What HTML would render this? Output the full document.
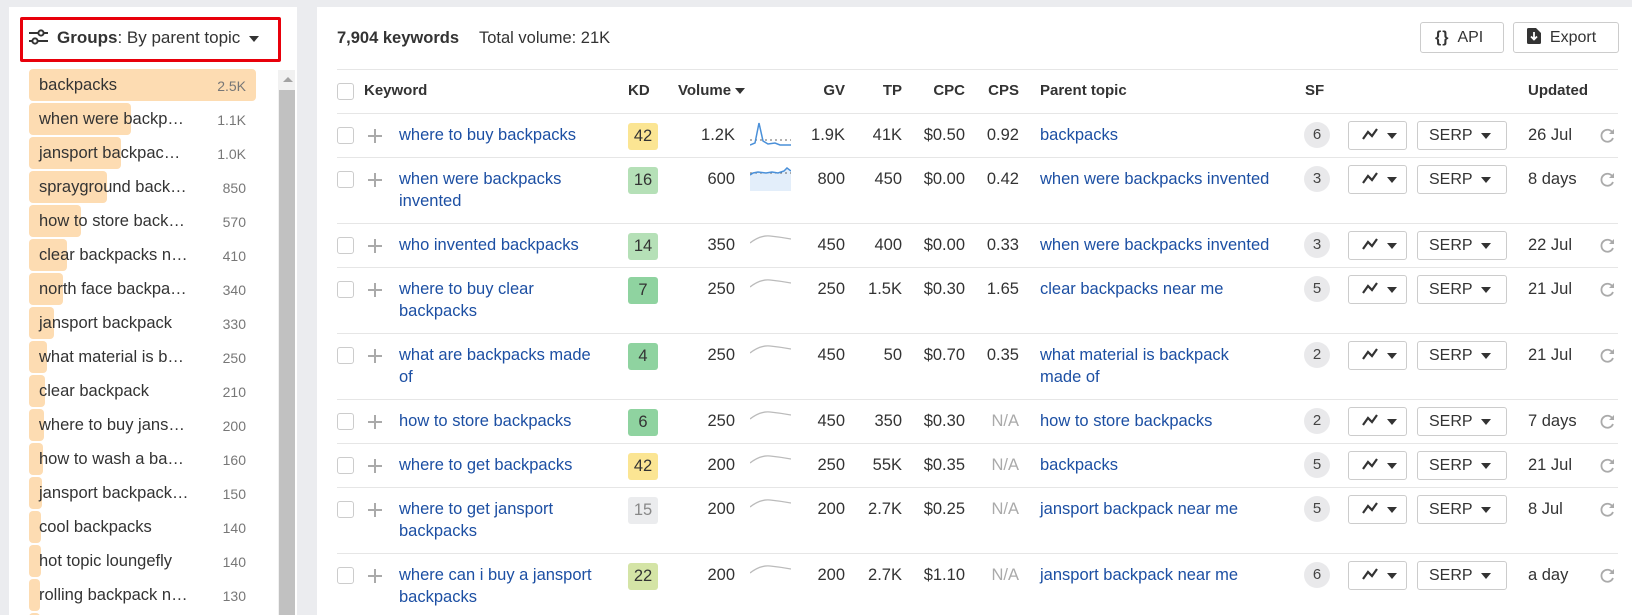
<!DOCTYPE html>
<html><head><meta charset="utf-8"><style>
*{box-sizing:border-box;margin:0;padding:0}
html,body{width:1632px;height:615px;overflow:hidden}
body{background:#ebecef;font-family:"Liberation Sans",Arial,sans-serif;color:#333;position:relative}
.a{position:absolute;white-space:nowrap}
#left{position:absolute;left:9px;top:7px;width:288px;height:608px;background:#fff}
#main{position:absolute;left:317px;top:7px;width:1315px;height:608px;background:#fff}
.it{position:absolute;left:29px;width:227px;height:32px;font-size:16.5px;line-height:32px}
.bar{position:absolute;left:0;top:0;height:32px;background:#fddcb2;border-radius:4px}
.it .t{position:absolute;left:10px;top:0}
.it .c{position:absolute;right:10px;top:1px;font-size:14px;color:#777}
.line{position:absolute;left:337px;right:14px;height:1px;background:#e6e6e6}
.h{position:absolute;top:80px;font-size:15px;font-weight:bold;line-height:22px}
.cb{position:absolute;width:17px;height:17px;border:1px solid #ccc;border-radius:3px;background:#fff}
.row{position:absolute;left:0;width:1632px;font-size:16.5px;line-height:22px}
.row .a{top:11px}
.lk{color:#1c4fa3}
.kd{position:absolute;top:10px;left:628px;width:30px;height:27px;border-radius:3px;text-align:center;line-height:27px!important}
.r{text-align:right}
.sf{position:absolute;left:1304px;top:9px;width:26px;height:26px;border-radius:13px;background:#e9e9eb;text-align:center;line-height:26px;font-size:15px;color:#444}
.btn{position:absolute;top:8px;height:29px;border:1px solid #ccc;border-radius:3px;background:#fff;font-size:16px;line-height:27px}
.tri{display:inline-block;width:0;height:0;border-left:5px solid transparent;border-right:5px solid transparent;border-top:6px solid #333;vertical-align:middle}
.na{color:#aaa}
.pl{position:absolute;left:367px;top:15px}
.rf{position:absolute;left:1600px;top:15px}
</style></head><body>
<div id="left"></div>
<div class="a" style="left:20px;top:17px;width:261px;height:45px;border:3px solid #e8000b;border-radius:2px"></div>
<svg class="a" style="left:29px;top:29px" width="19" height="17" viewBox="0 0 19 17"><g stroke="#333" stroke-width="2" fill="none"><line x1="0" y1="4" x2="19" y2="4"/><line x1="0" y1="12" x2="19" y2="12"/><circle cx="12" cy="4" r="2.6" fill="#fff"/><circle cx="6" cy="12" r="2.6" fill="#fff"/></g></svg>
<div class="a" style="left:57px;top:27px;font-size:17px;line-height:22px"><b>Groups</b>: By parent topic <span class="tri" style="margin-left:4px"></span></div>
<div class="a" style="left:278px;top:70px;width:17px;height:560px;background:#f1f1f1"></div>
<div class="a" style="left:283px;top:77px;width:0;height:0;border-left:5px solid transparent;border-right:5px solid transparent;border-bottom:5px solid #a3a3a3"></div>
<div class="a" style="left:279px;top:90px;width:16px;height:540px;background:#c1c1c1"></div>

<div class="it" style="top:69px"><div class="bar" style="width:227px"></div><span class="t">backpacks</span><span class="c">2.5K</span></div>
<div class="it" style="top:103px"><div class="bar" style="width:102px"></div><span class="t">when were backp…</span><span class="c">1.1K</span></div>
<div class="it" style="top:137px"><div class="bar" style="width:92px"></div><span class="t">jansport backpac…</span><span class="c">1.0K</span></div>
<div class="it" style="top:171px"><div class="bar" style="width:78px"></div><span class="t">sprayground back…</span><span class="c">850</span></div>
<div class="it" style="top:205px"><div class="bar" style="width:52px"></div><span class="t">how to store back…</span><span class="c">570</span></div>
<div class="it" style="top:239px"><div class="bar" style="width:38px"></div><span class="t">clear backpacks n…</span><span class="c">410</span></div>
<div class="it" style="top:273px"><div class="bar" style="width:34px"></div><span class="t">north face backpa…</span><span class="c">340</span></div>
<div class="it" style="top:307px"><div class="bar" style="width:25px"></div><span class="t">jansport backpack</span><span class="c">330</span></div>
<div class="it" style="top:341px"><div class="bar" style="width:18px"></div><span class="t">what material is b…</span><span class="c">250</span></div>
<div class="it" style="top:375px"><div class="bar" style="width:16px"></div><span class="t">clear backpack</span><span class="c">210</span></div>
<div class="it" style="top:409px"><div class="bar" style="width:15px"></div><span class="t">where to buy jans…</span><span class="c">200</span></div>
<div class="it" style="top:443px"><div class="bar" style="width:14px"></div><span class="t">how to wash a ba…</span><span class="c">160</span></div>
<div class="it" style="top:477px"><div class="bar" style="width:13px"></div><span class="t">jansport backpack…</span><span class="c">150</span></div>
<div class="it" style="top:511px"><div class="bar" style="width:12px"></div><span class="t">cool backpacks</span><span class="c">140</span></div>
<div class="it" style="top:545px"><div class="bar" style="width:12px"></div><span class="t">hot topic loungefly</span><span class="c">140</span></div>
<div class="it" style="top:579px"><div class="bar" style="width:11px"></div><span class="t">rolling backpack n…</span><span class="c">130</span></div>
<div class="it" style="top:613px"><div class="bar" style="width:11px"></div></div>

<div id="main"></div>
<div class="a" style="left:337px;top:27px;font-size:16.5px;line-height:22px"><b>7,904 keywords</b><span style="margin-left:20px">Total volume: 21K</span></div>
<div class="btn" style="left:1420px;top:22px;width:84px;height:31px;line-height:29px;padding-left:14px"><b style="letter-spacing:1px">{}</b>&nbsp; API</div>
<div class="btn" style="left:1513px;top:22px;width:106px;height:31px;line-height:29px;padding-left:13px"><svg width="14" height="16" viewBox="0 0 14 16" style="vertical-align:-2px"><path d="M0 1.5Q0 0 1.5 0H9L14 5V14.5Q14 16 12.5 16H1.5Q0 16 0 14.5Z" fill="#333"/><path d="M7 4V11M4 8.5L7 11.5L10 8.5" stroke="#fff" stroke-width="1.8" fill="none"/></svg>&nbsp;&nbsp;Export</div>

<div class="line" style="top:69px"></div>
<div class="cb" style="left:337px;top:83px"></div>
<div class="h" style="left:364px">Keyword</div>
<div class="h" style="left:628px">KD</div>
<div class="h" style="left:678px">Volume <span class="tri" style="margin-left:0"></span></div>
<div class="h r" style="left:800px;width:45px">GV</div>
<div class="h r" style="left:860px;width:42px">TP</div>
<div class="h r" style="left:915px;width:50px">CPC</div>
<div class="h r" style="left:970px;width:49px">CPS</div>
<div class="h" style="left:1040px">Parent topic</div>
<div class="h" style="left:1305px">SF</div>
<div class="h" style="left:1528px">Updated</div>
<div class="line" style="top:113px"></div>

<div class="row" style="top:113px">
<div class="cb" style="left:337px;top:14px"></div><svg class="pl" width="16" height="16"><path d="M8 1V15M1 8H15" stroke="#aaa" stroke-width="2"/></svg>
<div class="a lk" style="left:399px">where to buy backpacks</div>
<div class="kd" style="background:#fbe593">42</div>
<div class="a r" style="left:670px;width:65px">1.2K</div>
<svg class="a" style="left:750px;top:8px" width="41" height="26"><line x1="0" y1="19" x2="41" y2="19" stroke="#666" stroke-dasharray="2 3" stroke-width="1"/><path d="M0 24L5 22L9 2L13 20L18 23L25 22L30 24L41 24" stroke="#4a90d9" stroke-width="1.5" fill="none"/></svg>
<div class="a r" style="left:790px;width:55px">1.9K</div><div class="a r" style="left:850px;width:52px">41K</div><div class="a r" style="left:900px;width:65px">$0.50</div><div class="a r" style="left:970px;width:49px">0.92</div>
<div class="a lk" style="left:1040px">backpacks</div>
<div class="sf">6</div>
<div class="btn" style="left:1348px;width:59px;padding-left:13px"><svg width="16" height="12"><path d="M1 11L6 4L10 8L15 1" stroke="#333" stroke-width="2.2" fill="none"/></svg>&nbsp;&nbsp;<span class="tri"></span></div>
<div class="btn" style="left:1417px;width:90px;padding-left:11px">SERP&nbsp;&nbsp;<span class="tri"></span></div>
<div class="a" style="left:1528px">26 Jul</div>
<svg class="rf" width="15" height="15"><path d="M12.5 4.5A6 6 0 1 0 13 10" stroke="#aaa" stroke-width="1.8" fill="none"/><path d="M14 1V6H9Z" fill="#aaa"/></svg>
</div>
<div class="line" style="top:157px"></div>

<div class="row" style="top:157px">
<div class="cb" style="left:337px;top:14px"></div><svg class="pl" width="16" height="16"><path d="M8 1V15M1 8H15" stroke="#aaa" stroke-width="2"/></svg>
<div class="a lk" style="left:399px">when were backpacks<br>invented</div>
<div class="kd" style="background:#b5e0b7">16</div>
<div class="a r" style="left:670px;width:65px">600</div>
<svg class="a" style="left:750px;top:8px" width="41" height="26"><path d="M0 10L3 8L8 7L16 8L22 7L28 8L34 6L37 3L41 6V26H0Z" fill="#e3eefa"/><line x1="0" y1="8" x2="41" y2="8" stroke="#666" stroke-dasharray="2 3"/><path d="M0 10L3 8L8 7L16 8L22 7L28 8L34 6L37 3L41 6" stroke="#4a90d9" stroke-width="1.5" fill="none"/></svg>
<div class="a r" style="left:790px;width:55px">800</div><div class="a r" style="left:850px;width:52px">450</div><div class="a r" style="left:900px;width:65px">$0.00</div><div class="a r" style="left:970px;width:49px">0.42</div>
<div class="a lk" style="left:1040px">when were backpacks invented</div>
<div class="sf">3</div>
<div class="btn" style="left:1348px;width:59px;padding-left:13px"><svg width="16" height="12"><path d="M1 11L6 4L10 8L15 1" stroke="#333" stroke-width="2.2" fill="none"/></svg>&nbsp;&nbsp;<span class="tri"></span></div>
<div class="btn" style="left:1417px;width:90px;padding-left:11px">SERP&nbsp;&nbsp;<span class="tri"></span></div>
<div class="a" style="left:1528px">8 days</div>
<svg class="rf" width="15" height="15"><path d="M12.5 4.5A6 6 0 1 0 13 10" stroke="#aaa" stroke-width="1.8" fill="none"/><path d="M14 1V6H9Z" fill="#aaa"/></svg>
</div>
<div class="line" style="top:223px"></div>

<div class="row" style="top:223px">
<div class="cb" style="left:337px;top:14px"></div><svg class="pl" width="16" height="16"><path d="M8 1V15M1 8H15" stroke="#aaa" stroke-width="2"/></svg>
<div class="a lk" style="left:399px">who invented backpacks</div>
<div class="kd" style="background:#b5e0b7">14</div>
<div class="a r" style="left:670px;width:65px">350</div>
<svg class="a" style="left:750px;top:8px" width="41" height="26"><path d="M0 12Q10 4 20 5T41 8" stroke="#bbb" stroke-width="1.3" fill="none"/></svg>
<div class="a r" style="left:790px;width:55px">450</div><div class="a r" style="left:850px;width:52px">400</div><div class="a r" style="left:900px;width:65px">$0.00</div><div class="a r" style="left:970px;width:49px">0.33</div>
<div class="a lk" style="left:1040px">when were backpacks invented</div>
<div class="sf">3</div>
<div class="btn" style="left:1348px;width:59px;padding-left:13px"><svg width="16" height="12"><path d="M1 11L6 4L10 8L15 1" stroke="#333" stroke-width="2.2" fill="none"/></svg>&nbsp;&nbsp;<span class="tri"></span></div>
<div class="btn" style="left:1417px;width:90px;padding-left:11px">SERP&nbsp;&nbsp;<span class="tri"></span></div>
<div class="a" style="left:1528px">22 Jul</div>
<svg class="rf" width="15" height="15"><path d="M12.5 4.5A6 6 0 1 0 13 10" stroke="#aaa" stroke-width="1.8" fill="none"/><path d="M14 1V6H9Z" fill="#aaa"/></svg>
</div>
<div class="line" style="top:267px"></div>

<div class="row" style="top:267px">
<div class="cb" style="left:337px;top:14px"></div><svg class="pl" width="16" height="16"><path d="M8 1V15M1 8H15" stroke="#aaa" stroke-width="2"/></svg>
<div class="a lk" style="left:399px">where to buy clear<br>backpacks</div>
<div class="kd" style="background:#8fd3a0">7</div>
<div class="a r" style="left:670px;width:65px">250</div>
<svg class="a" style="left:750px;top:8px" width="41" height="26"><path d="M0 12Q10 4 20 5T41 8" stroke="#bbb" stroke-width="1.3" fill="none"/></svg>
<div class="a r" style="left:790px;width:55px">250</div><div class="a r" style="left:850px;width:52px">1.5K</div><div class="a r" style="left:900px;width:65px">$0.30</div><div class="a r" style="left:970px;width:49px">1.65</div>
<div class="a lk" style="left:1040px">clear backpacks near me</div>
<div class="sf">5</div>
<div class="btn" style="left:1348px;width:59px;padding-left:13px"><svg width="16" height="12"><path d="M1 11L6 4L10 8L15 1" stroke="#333" stroke-width="2.2" fill="none"/></svg>&nbsp;&nbsp;<span class="tri"></span></div>
<div class="btn" style="left:1417px;width:90px;padding-left:11px">SERP&nbsp;&nbsp;<span class="tri"></span></div>
<div class="a" style="left:1528px">21 Jul</div>
<svg class="rf" width="15" height="15"><path d="M12.5 4.5A6 6 0 1 0 13 10" stroke="#aaa" stroke-width="1.8" fill="none"/><path d="M14 1V6H9Z" fill="#aaa"/></svg>
</div>
<div class="line" style="top:333px"></div>

<div class="row" style="top:333px">
<div class="cb" style="left:337px;top:14px"></div><svg class="pl" width="16" height="16"><path d="M8 1V15M1 8H15" stroke="#aaa" stroke-width="2"/></svg>
<div class="a lk" style="left:399px">what are backpacks made<br>of</div>
<div class="kd" style="background:#8fd3a0">4</div>
<div class="a r" style="left:670px;width:65px">250</div>
<svg class="a" style="left:750px;top:8px" width="41" height="26"><path d="M0 12Q10 4 20 5T41 8" stroke="#bbb" stroke-width="1.3" fill="none"/></svg>
<div class="a r" style="left:790px;width:55px">450</div><div class="a r" style="left:850px;width:52px">50</div><div class="a r" style="left:900px;width:65px">$0.70</div><div class="a r" style="left:970px;width:49px">0.35</div>
<div class="a lk" style="left:1040px">what material is backpack<br>made of</div>
<div class="sf">2</div>
<div class="btn" style="left:1348px;width:59px;padding-left:13px"><svg width="16" height="12"><path d="M1 11L6 4L10 8L15 1" stroke="#333" stroke-width="2.2" fill="none"/></svg>&nbsp;&nbsp;<span class="tri"></span></div>
<div class="btn" style="left:1417px;width:90px;padding-left:11px">SERP&nbsp;&nbsp;<span class="tri"></span></div>
<div class="a" style="left:1528px">21 Jul</div>
<svg class="rf" width="15" height="15"><path d="M12.5 4.5A6 6 0 1 0 13 10" stroke="#aaa" stroke-width="1.8" fill="none"/><path d="M14 1V6H9Z" fill="#aaa"/></svg>
</div>
<div class="line" style="top:399px"></div>

<div class="row" style="top:399px">
<div class="cb" style="left:337px;top:14px"></div><svg class="pl" width="16" height="16"><path d="M8 1V15M1 8H15" stroke="#aaa" stroke-width="2"/></svg>
<div class="a lk" style="left:399px">how to store backpacks</div>
<div class="kd" style="background:#8fd3a0">6</div>
<div class="a r" style="left:670px;width:65px">250</div>
<svg class="a" style="left:750px;top:8px" width="41" height="26"><path d="M0 12Q10 4 20 5T41 8" stroke="#bbb" stroke-width="1.3" fill="none"/></svg>
<div class="a r" style="left:790px;width:55px">450</div><div class="a r" style="left:850px;width:52px">350</div><div class="a r" style="left:900px;width:65px">$0.30</div><div class="a r na" style="left:970px;width:49px">N/A</div>
<div class="a lk" style="left:1040px">how to store backpacks</div>
<div class="sf">2</div>
<div class="btn" style="left:1348px;width:59px;padding-left:13px"><svg width="16" height="12"><path d="M1 11L6 4L10 8L15 1" stroke="#333" stroke-width="2.2" fill="none"/></svg>&nbsp;&nbsp;<span class="tri"></span></div>
<div class="btn" style="left:1417px;width:90px;padding-left:11px">SERP&nbsp;&nbsp;<span class="tri"></span></div>
<div class="a" style="left:1528px">7 days</div>
<svg class="rf" width="15" height="15"><path d="M12.5 4.5A6 6 0 1 0 13 10" stroke="#aaa" stroke-width="1.8" fill="none"/><path d="M14 1V6H9Z" fill="#aaa"/></svg>
</div>
<div class="line" style="top:443px"></div>

<div class="row" style="top:443px">
<div class="cb" style="left:337px;top:14px"></div><svg class="pl" width="16" height="16"><path d="M8 1V15M1 8H15" stroke="#aaa" stroke-width="2"/></svg>
<div class="a lk" style="left:399px">where to get backpacks</div>
<div class="kd" style="background:#fbe593">42</div>
<div class="a r" style="left:670px;width:65px">200</div>
<svg class="a" style="left:750px;top:8px" width="41" height="26"><path d="M0 12Q10 4 20 5T41 8" stroke="#bbb" stroke-width="1.3" fill="none"/></svg>
<div class="a r" style="left:790px;width:55px">250</div><div class="a r" style="left:850px;width:52px">55K</div><div class="a r" style="left:900px;width:65px">$0.35</div><div class="a r na" style="left:970px;width:49px">N/A</div>
<div class="a lk" style="left:1040px">backpacks</div>
<div class="sf">5</div>
<div class="btn" style="left:1348px;width:59px;padding-left:13px"><svg width="16" height="12"><path d="M1 11L6 4L10 8L15 1" stroke="#333" stroke-width="2.2" fill="none"/></svg>&nbsp;&nbsp;<span class="tri"></span></div>
<div class="btn" style="left:1417px;width:90px;padding-left:11px">SERP&nbsp;&nbsp;<span class="tri"></span></div>
<div class="a" style="left:1528px">21 Jul</div>
<svg class="rf" width="15" height="15"><path d="M12.5 4.5A6 6 0 1 0 13 10" stroke="#aaa" stroke-width="1.8" fill="none"/><path d="M14 1V6H9Z" fill="#aaa"/></svg>
</div>
<div class="line" style="top:487px"></div>

<div class="row" style="top:487px">
<div class="cb" style="left:337px;top:14px"></div><svg class="pl" width="16" height="16"><path d="M8 1V15M1 8H15" stroke="#aaa" stroke-width="2"/></svg>
<div class="a lk" style="left:399px">where to get jansport<br>backpacks</div>
<div class="kd" style="background:#ebecee;color:#888">15</div>
<div class="a r" style="left:670px;width:65px">200</div>
<svg class="a" style="left:750px;top:8px" width="41" height="26"><path d="M0 12Q10 4 20 5T41 8" stroke="#bbb" stroke-width="1.3" fill="none"/></svg>
<div class="a r" style="left:790px;width:55px">200</div><div class="a r" style="left:850px;width:52px">2.7K</div><div class="a r" style="left:900px;width:65px">$0.25</div><div class="a r na" style="left:970px;width:49px">N/A</div>
<div class="a lk" style="left:1040px">jansport backpack near me</div>
<div class="sf">5</div>
<div class="btn" style="left:1348px;width:59px;padding-left:13px"><svg width="16" height="12"><path d="M1 11L6 4L10 8L15 1" stroke="#333" stroke-width="2.2" fill="none"/></svg>&nbsp;&nbsp;<span class="tri"></span></div>
<div class="btn" style="left:1417px;width:90px;padding-left:11px">SERP&nbsp;&nbsp;<span class="tri"></span></div>
<div class="a" style="left:1528px">8 Jul</div>
<svg class="rf" width="15" height="15"><path d="M12.5 4.5A6 6 0 1 0 13 10" stroke="#aaa" stroke-width="1.8" fill="none"/><path d="M14 1V6H9Z" fill="#aaa"/></svg>
</div>
<div class="line" style="top:553px"></div>

<div class="row" style="top:553px">
<div class="cb" style="left:337px;top:14px"></div><svg class="pl" width="16" height="16"><path d="M8 1V15M1 8H15" stroke="#aaa" stroke-width="2"/></svg>
<div class="a lk" style="left:399px">where can i buy a jansport<br>backpacks</div>
<div class="kd" style="background:#d4e4a6">22</div>
<div class="a r" style="left:670px;width:65px">200</div>
<svg class="a" style="left:750px;top:8px" width="41" height="26"><path d="M0 12Q10 4 20 5T41 8" stroke="#bbb" stroke-width="1.3" fill="none"/></svg>
<div class="a r" style="left:790px;width:55px">200</div><div class="a r" style="left:850px;width:52px">2.7K</div><div class="a r" style="left:900px;width:65px">$1.10</div><div class="a r na" style="left:970px;width:49px">N/A</div>
<div class="a lk" style="left:1040px">jansport backpack near me</div>
<div class="sf">6</div>
<div class="btn" style="left:1348px;width:59px;padding-left:13px"><svg width="16" height="12"><path d="M1 11L6 4L10 8L15 1" stroke="#333" stroke-width="2.2" fill="none"/></svg>&nbsp;&nbsp;<span class="tri"></span></div>
<div class="btn" style="left:1417px;width:90px;padding-left:11px">SERP&nbsp;&nbsp;<span class="tri"></span></div>
<div class="a" style="left:1528px">a day</div>
<svg class="rf" width="15" height="15"><path d="M12.5 4.5A6 6 0 1 0 13 10" stroke="#aaa" stroke-width="1.8" fill="none"/><path d="M14 1V6H9Z" fill="#aaa"/></svg>
</div>
</body></html>
